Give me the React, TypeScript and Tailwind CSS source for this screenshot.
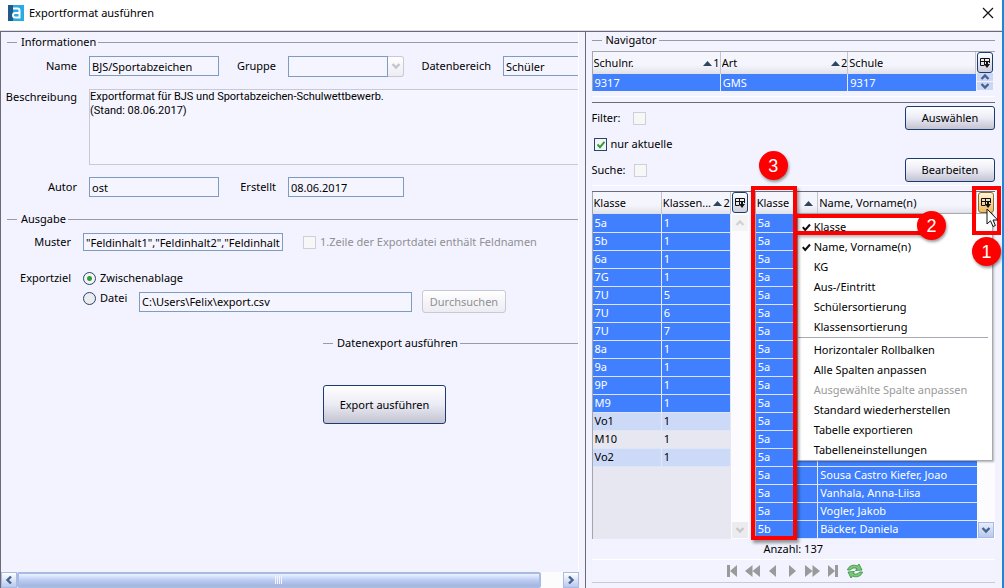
import type { ReactNode } from "react";
import clsx from "clsx";

const classes = [
  ["5a", "1"],
  ["5b", "1"],
  ["6a", "1"],
  ["7G", "1"],
  ["7U", "5"],
  ["7U", "6"],
  ["7U", "7"],
  ["8a", "1"],
  ["9a", "1"],
  ["9P", "1"],
  ["M9", "1"],
  ["Vo1", "1"],
  ["M10", "1"],
  ["Vo2", "1"],
];

const pupils = [
  ...Array.from({ length: 14 }, () => ["5a", ""]),
  ["5a", "Sousa Castro Kiefer, Joao"],
  ["5a", "Vanhala, Anna-Liisa"],
  ["5a", "Vogler, Jakob"],
  ["5b", "Bäcker, Daniela"],
];

const columnItems = [
  { label: "Klasse", checked: true },
  { label: "Name, Vorname(n)", checked: true },
  { label: "KG", checked: false },
  { label: "Aus-/Eintritt", checked: false },
  { label: "Schülersortierung", checked: false },
  { label: "Klassensortierung", checked: false },
];

const actionItems = [
  { label: "Horizontaler Rollbalken" },
  { label: "Alle Spalten anpassen" },
  { label: "Ausgewählte Spalte anpassen", disabled: true },
  { label: "Standard wiederherstellen" },
  { label: "Tabelle exportieren" },
  { label: "Tabelleneinstellungen" },
];

const field = "border border-[#7f9bc0] bg-[#f5f5ff] px-0.5 outline-none";
const button =
  "rounded-[3px] border border-[#1b3c73] bg-linear-to-b from-white via-[#ebebf5] to-[#c3c3d2]";

function Heading({ children, className }: { children: ReactNode; className?: string }) {
  return (
    <div className={clsx("flex h-4 items-center", className)}>
      <span className="mr-1 h-px w-2.5 bg-[#9a9aa0]" />
      <h2>{children}</h2>
      <span className="ml-0.5 h-px flex-1 bg-[#9a9aa0]" />
    </div>
  );
}

function Chevron({ dir, color = "#46628f" }: { dir: "up" | "down" | "left" | "right"; color?: string }) {
  const d = {
    up: "M1.500 7 5 3.500 8.500 7",
    down: "M1.500 3 5 6.500 8.500 3",
    left: "M7 1.500 3.500 5 7 8.500",
    right: "M3 1.500 6.500 5 3 8.500",
  }[dir];
  return (
    <svg width="10" height="10" viewBox="0 0 10 10" fill="none" stroke={color} strokeWidth="2.4" className="shrink-0">
      <path d={d} />
    </svg>
  );
}

function SortArrow({ order }: { order?: string }) {
  return (
    <span className={clsx("flex shrink-0 items-center gap-px", !order && "pr-1")}>
      <svg width="9" height="5" viewBox="0 0 9 5" fill="#2c4560">
        <path d="M4.500 0 9 5H0z" />
      </svg>
      {order}
    </span>
  );
}

function ColumnButton({ active }: { active?: boolean }) {
  return (
    <button
      aria-label="Spalten"
      className={clsx(
        "flex h-[21px] w-4 shrink-0 items-center justify-center rounded-[3px] border",
        active
          ? "border-[#8a6a2c] bg-linear-to-b from-[#fff3dc] to-[#f0b95c]"
          : "border-[#1b3c73] bg-linear-to-b from-white to-[#cfcfdd]"
      )}
    >
      <svg width="10" height="10" viewBox="0 0 10 10" fill="none" stroke="#111" className="shrink-0">
        <path d="M4 7.500H.500v-7h9V5M.500 3.500h9M4.500 .500v7" />
        <path d="M6 4h2v2h2L7 10 4 6h2z" fill="#111" stroke="none" />
      </svg>
    </button>
  );
}

function HeadCell({ label, sort, order }: { label: string; sort?: boolean; order?: string }) {
  return (
    <th className="h-[22px] border-r border-[#c4c4cc] bg-linear-to-b from-[#f5f5fd] from-60% to-[#e0e0e8] p-0 pl-px font-normal">
      <div className="flex items-center justify-between overflow-hidden whitespace-nowrap">
        <span>{label}</span>
        {sort && <SortArrow order={order} />}
      </div>
    </th>
  );
}

function Badge({ children, className }: { children: ReactNode; className: string }) {
  return (
    <span
      className={clsx(
        "absolute z-20 flex size-[29px] items-center justify-center rounded-full bg-[#ff0000] font-['Liberation_Sans'] text-lg text-white shadow-[1px_2px_3px_rgba(0,0,0,0.4)]",
        className
      )}
    >
      {children}
    </span>
  );
}

function ExportForm() {
  return (
    <section className="mr-1.5 flex min-w-0 flex-col overflow-hidden border-l border-[#6b6b73]">
      <div className="flex flex-1 flex-col border-r border-white pt-0.5">
        <Heading className="ml-1.5">Informationen</Heading>

        <div className="mt-1.5 flex h-5 items-center">
          <label htmlFor="name" className="w-[76px] text-right">Name</label>
          <input id="name" readOnly defaultValue="BJS/Sportabzeichen" className={clsx(field, "ml-3 h-5 w-[130px]")} />
          <label htmlFor="gruppe" className="w-[57px] text-right">Gruppe</label>
          <div className="relative ml-3 flex h-[21px]">
            <select id="gruppe" disabled className="w-[100px] appearance-none border border-[#7f9bc0] bg-[#f5f5ff]" />
            <span className="flex w-4 items-center justify-center rounded-r-[3px] border border-l-0 border-[#c9c9d6] bg-linear-to-b from-white to-[#ececf4]">
              <Chevron dir="down" color="#c4c4cc" />
            </span>
          </div>
          <label htmlFor="bereich" className="w-[87px] text-right">Datenbereich</label>
          <input id="bereich" readOnly defaultValue="Schüler" className={clsx(field, "ml-3 h-5 min-w-0 flex-1 border-r-0")} />
        </div>

        <div className="mt-[13px] flex">
          <label htmlFor="beschreibung" className="w-[76px] text-right">Beschreibung</label>
          <textarea
            id="beschreibung"
            readOnly
            defaultValue={"Exportformat für BJS und Sportabzeichen-Schulwettbewerb.\n(Stand: 08.06.2017)"}
            className="ml-3 h-[76px] min-w-0 flex-1 resize-none border border-r-0 border-[#c9c9d6] bg-[#f5f5ff] font-[Roboto] leading-[14px] outline-none"
          />
        </div>

        <div className="mt-3 flex h-5 items-center">
          <label htmlFor="autor" className="w-[76px] text-right">Autor</label>
          <input id="autor" readOnly defaultValue="ost" className={clsx(field, "ml-3 h-5 w-[130px]")} />
          <label htmlFor="erstellt" className="w-[57px] text-right">Erstellt</label>
          <input id="erstellt" readOnly defaultValue="08.06.2017" className={clsx(field, "ml-3 h-5 w-[116px]")} />
        </div>

        <Heading className="mt-3.5 ml-1.5">Ausgabe</Heading>

        <div className="mt-1.5 flex h-[18px] items-center">
          <label htmlFor="muster" className="w-[70px] text-right">Muster</label>
          <input
            id="muster"
            readOnly
            defaultValue={'"Feldinhalt1","Feldinhalt2","Feldinhalt3"'}
            className={clsx(field, "ml-3 h-[18px] w-[200px]")}
          />
          <label className="ml-5 flex items-center gap-1 text-[#8f8f94]">
            <input type="checkbox" disabled className="size-[13px] appearance-none border border-[#cfcfd6] bg-[#f7f7f7]" />
            1.Zeile der Exportdatei enthält Feldnamen
          </label>
        </div>

        <div className="mt-[17px] flex h-5 items-center">
          <span className="w-[70px] text-right">Exportziel</span>
          <label className="ml-3 flex items-center gap-1">
            <input
              type="radio"
              name="ziel"
              defaultChecked
              className="size-[13px] appearance-none rounded-full border border-[#26446f] bg-[#f4f4f4] checked:bg-[radial-gradient(circle,#2f9e3a_0_2px,#f4f4f4_3px)]"
            />
            Zwischenablage
          </label>
        </div>

        <div className="mt-0.5 flex h-[23px] items-center">
          <label className="ml-[82px] flex w-14 items-center gap-1 self-start">
            <input type="radio" name="ziel" className="size-[13px] appearance-none rounded-full border border-[#26446f] bg-[#ececec]" />
            Datei
          </label>
          <input aria-label="Datei" readOnly defaultValue="C:\Users\Felix\export.csv" className={clsx(field, "h-5 w-[273px]")} />
          <button disabled className="ml-2.5 h-[23px] w-[84px] rounded-[3px] border border-[#c9c9d6] bg-linear-to-b from-white to-[#ececf2] text-[#8f8f94]">
            Durchsuchen
          </button>
        </div>

        <div className="mt-[22px] ml-[322px]">
          <Heading>Datenexport ausführen</Heading>
          <button className={clsx(button, "mt-[34px] h-[39px] w-[123px]")}>Export ausführen</button>
        </div>
      </div>

      <div className="flex h-4 bg-[#fcfcfc]">
        <button aria-label="Nach links" className="flex w-4 items-center justify-center border border-[#a9bbe4] bg-linear-to-b from-white to-[#b9c9ec]">
          <Chevron dir="left" />
        </button>
        <div className="flex flex-1">
          <div className="flex w-[96%] items-center justify-center gap-px rounded-[2px] border-2 border-[#a9bbe4] bg-linear-to-b from-[#eef3ff] via-[#bccdf5] to-[#a5b5dc]">
            {[0, 1, 2, 3].map((i) => (
              <span key={i} className="h-2 w-px bg-[#f2f6ff]" />
            ))}
          </div>
        </div>
        <button aria-label="Nach rechts" className="flex w-4 items-center justify-center border border-[#a9bbe4] bg-linear-to-b from-white to-[#b9c9ec]">
          <Chevron dir="right" />
        </button>
      </div>
    </section>
  );
}

function SchoolTable() {
  return (
    <div className="flex border-t border-l border-[#a5a5ab]">
      <table className="flex-1 table-fixed border-collapse text-left">
        <thead>
          <tr>
            <HeadCell label="Schulnr." sort order="1" />
            <HeadCell label="Art" sort order="2" />
            <HeadCell label="Schule" />
          </tr>
        </thead>
        <tbody>
          <tr className="h-[17px] bg-[#4080ff] text-white">
            <td className="w-1/3 border-r border-[#e6e9f5] p-0 pl-0.5">9317</td>
            <td className="w-1/3 border-r border-[#e6e9f5] p-0 pl-0.5">GMS</td>
            <td className="w-1/3 p-0 pl-0.5">9317</td>
          </tr>
        </tbody>
      </table>
      <div className="ml-px w-[18px]">
        <ColumnButton />
        <button aria-label="Hoch" className="flex h-2 w-4 items-center justify-center overflow-hidden bg-[#ccd8f3]">
          <Chevron dir="up" />
        </button>
        <button aria-label="Runter" className="mt-px flex h-2 w-4 items-center justify-center overflow-hidden bg-[#ccd8f3]">
          <Chevron dir="down" />
        </button>
      </div>
    </div>
  );
}

function ClassTable() {
  return (
    <div className="flex h-[347px] border-l border-[#a5a5ab] bg-[#e7e7f1]">
      <div className="flex-1">
        <table className="w-full table-fixed border-collapse text-left">
          <thead>
            <tr>
              <HeadCell label="Klasse" />
              <HeadCell label="Klassen..." sort order="2" />
            </tr>
          </thead>
          <tbody>
            {classes.map(([name, no], i) => (
              <tr
                key={i}
                className={clsx(
                  "h-[18px] border-b border-[#dfe5f8]",
                  i < 11 ? "bg-[#4080ff] text-white" : i % 2 ? "bg-[#ccd9f7]" : "bg-[#e7e7f1]"
                )}
              >
                <td className="border-r border-[#e6e9f5] p-0 pl-0.5">{name}</td>
                <td className="p-0 pl-0.5">{no}</td>
              </tr>
            ))}
          </tbody>
        </table>
      </div>
      <div className="flex w-[18px] flex-col items-center bg-[#fcfcfe]">
        <ColumnButton />
        <span className="mt-0.5 flex size-4 items-center justify-center bg-[#f4f4f6]">
          <Chevron dir="up" color="#d2d2d2" />
        </span>
        <span className="mt-auto mb-px flex size-4 items-center justify-center bg-[#ececf0]">
          <Chevron dir="down" color="#c8c8c8" />
        </span>
      </div>
    </div>
  );
}

function ColumnMenu() {
  return (
    <div role="menu" className="absolute top-[21px] right-0.5 left-[42px] z-10 border border-[#a9a9b4] bg-white pt-[3px] shadow-[1px_1px_2px_rgba(0,0,0,0.3)]">
      {columnItems.map((item) => (
        <button key={item.label} role="menuitemcheckbox" aria-checked={item.checked} className="flex h-5 w-full items-center pl-1">
          <span className="flex w-3">
            {item.checked && (
              <svg width="9" height="9" viewBox="0 0 9 9" fill="none" stroke="#111" strokeWidth="2">
                <path d="M.8 4.200 3.200 7 8 1.500" />
              </svg>
            )}
          </span>
          {item.label}
        </button>
      ))}
      <hr className="mr-1 mb-0.5 border-[#a9a9b4]" />
      {actionItems.map((item) => (
        <button
          key={item.label}
          role="menuitem"
          disabled={item.disabled}
          className="flex h-5 w-full items-center pl-4 disabled:text-[#9a9a9a]"
        >
          {item.label}
        </button>
      ))}
    </div>
  );
}

function PupilTable() {
  return (
    <div className="relative">
      <div className="flex h-[347px] overflow-hidden border-l border-[#a5a5ab]">
        <div className="flex-1">
          <table className="w-full table-fixed border-collapse text-left">
            <colgroup>
              <col className="w-[62px]" />
              <col />
            </colgroup>
            <thead>
              <tr>
                <HeadCell label="Klasse" sort />
                <HeadCell label="Name, Vorname(n)" />
              </tr>
            </thead>
            <tbody>
              {pupils.map(([name, pupil], i) => (
                <tr key={i} className="h-[18px] border-b border-[#dfe5f8] bg-[#4080ff] text-white">
                  <td className="border-r border-[#e6e9f5] p-0 pl-0.5">{name}</td>
                  <td className="p-0 pl-0.5 whitespace-nowrap">{pupil}</td>
                </tr>
              ))}
            </tbody>
          </table>
        </div>
        <div className="flex w-[18px] flex-col items-center bg-[#fcfcfe]">
          <ColumnButton active />
          <button aria-label="Runter" className="mt-auto mb-px flex size-4 items-center justify-center border border-[#a9bbe4] bg-linear-to-b from-[#e6edfc] to-[#b9c9ec]">
            <Chevron dir="down" />
          </button>
        </div>
      </div>

      <ColumnMenu />

      <span className="absolute -top-1.5 -left-1 z-20 h-[354px] w-[46px] border-4 border-[#ff0000] shadow-[2px_3px_3px_rgba(0,0,0,0.4)]" />
      <span className="absolute top-[22px] left-[42px] z-20 h-[21px] w-[130px] border-y-4 border-[#ff0000] shadow-[1px_2px_3px_rgba(0,0,0,0.3)]" />
      <span className="absolute -top-1.5 -right-1.5 z-20 h-[49px] w-[29px] border-4 border-[#ff0000]" />
      <Badge className="-top-[41px] left-1">3</Badge>
      <Badge className="top-[19px] right-[49px]">2</Badge>
      <Badge className="top-[45px] -right-1.5">1</Badge>
      <svg className="absolute top-4 -right-1 z-30" width="13" height="20" viewBox="0 0 13 20" fill="#fff" stroke="#111">
        <path d="M1 1v15l3.500-3.200L7 18.500l2.400-1-2.400-5.500h4.700z" />
      </svg>
    </div>
  );
}

function NavigationBar() {
  return (
    <nav className="flex h-[23px] items-center justify-center gap-[7px] border-t border-white pl-1 text-[#9a9a9a]">
      <button aria-label="Erster">
        <svg width="12" height="12" viewBox="0 0 12 12" fill="currentColor"><path d="M1 0h3v12H1zM11 0v12L4 6z" /></svg>
      </button>
      <button aria-label="Schnell zurück">
        <svg width="15" height="12" viewBox="0 0 15 12" fill="currentColor"><path d="M7.500 0v12L0 6zM15 0v12L7.500 6z" /></svg>
      </button>
      <button aria-label="Zurück">
        <svg width="12" height="12" viewBox="0 0 12 12" fill="currentColor"><path d="M9 0v12L2 6z" /></svg>
      </button>
      <button aria-label="Weiter">
        <svg width="12" height="12" viewBox="0 0 12 12" fill="currentColor"><path d="M3 0v12l7-6z" /></svg>
      </button>
      <button aria-label="Schnell weiter">
        <svg width="15" height="12" viewBox="0 0 15 12" fill="currentColor"><path d="M0 0v12l7.500-6zM7.500 0v12L15 6z" /></svg>
      </button>
      <button aria-label="Letzter">
        <svg width="12" height="12" viewBox="0 0 12 12" fill="currentColor"><path d="M8 0h3v12H8zM1 0v12l7-6z" /></svg>
      </button>
      <button aria-label="Aktualisieren">
        <svg width="18" height="16" viewBox="0 0 18 16" fill="#7cc979" stroke="#2f8b3c" strokeWidth=".8" strokeLinejoin="round">
          <path d="M1.500 7C2.500 3 7 1 11.500 3l1.500-2 3 6-6.500.5L11 5.500C8 4.300 5.500 5 4.500 7z" />
          <path d="M16.500 9C15.500 13 11 15 6.500 13L5 15 2 9l6.500-.5L7 10.500c3 1.200 5.500.5 6.500-1.500z" />
        </svg>
      </button>
    </nav>
  );
}

function Navigator() {
  return (
    <section className="min-w-0 border-l border-[#6b6b73] pr-[7px] pl-1.5">
      <Heading>Navigator</Heading>
      <div className="mt-[3px]">
        <SchoolTable />
      </div>

      <div className="mt-[5px] border-t border-white pt-[5px]">
        <div className="border-t border-[#6b6b73] pt-[3px]">
          <div className="flex h-6 items-center">
            <label className="flex items-center gap-3">
              Filter:
              <input type="checkbox" className="size-[13px] appearance-none border border-[#cfcfd6] bg-[#f7f7f7]" />
            </label>
            <button className={clsx(button, "ml-auto h-6 w-[90px]")}>Auswählen</button>
          </div>
          <label className="flex h-7 items-center gap-1 pl-0.5">
            <span className="relative flex">
              <input type="checkbox" defaultChecked className="size-[13px] appearance-none border border-[#26446f] bg-[#f4f4f4]" />
              <svg className="absolute top-[3px] left-[3px]" width="8" height="8" viewBox="0 0 8 8" fill="none" stroke="#2f9e3a" strokeWidth="2">
                <path d="M.5 3.500 3 6.200 7.500.8" />
              </svg>
            </span>
            nur aktuelle
          </label>
          <div className="flex h-6 items-center">
            <label className="flex items-center gap-2">
              Suche:
              <input type="checkbox" className="size-[13px] appearance-none border border-[#cfcfd6] bg-[#f7f7f7]" />
            </label>
            <button className={clsx(button, "ml-auto h-6 w-[90px]")}>Bearbeiten</button>
          </div>
        </div>
      </div>

      <div className="mt-[3px] border-t border-white pt-[5px]">
        <div className="grid grid-cols-[157fr_240fr] gap-1.5 border-t border-[#6b6b73]">
          <ClassTable />
          <PupilTable />
        </div>
      </div>

      <p className="flex h-5 items-center justify-center">Anzahl: 137</p>
      <NavigationBar />
      <hr className="border-[#c9c9d6]" />
    </section>
  );
}

export default function App() {
  return (
    <div className="flex h-screen flex-col overflow-hidden border-r-2 border-[#1a86dc] bg-[#f3f3ff] font-['Noto_Sans',sans-serif] text-[11px] leading-4 text-black">
      <header className="flex h-[31px] shrink-0 items-center border-b border-[#dcdcee] bg-white pr-2 pb-1 pl-2">
        <svg width="16" height="16" viewBox="0 0 16 16">
          <path d="M0 0h16v16H0z" fill="#29abe2" />
          <path d="M0 0h5v16H0z" fill="#1d5a8e" />
          <path d="M5 3.500h4.500q2 0 2 2v7H7.500q-2.500 0-2.500-2.300T7.500 8h4" fill="none" stroke="#fff" strokeWidth="2" />
        </svg>
        <h1 className="ml-[5px] flex-1">Exportformat ausführen</h1>
        <button aria-label="Schließen">
          <svg width="12" height="12" viewBox="0 0 12 12" fill="none" stroke="#111" strokeWidth="1.200">
            <path d="m1 1 10 10M11 1 1 11" />
          </svg>
        </button>
      </header>
      <main className="grid flex-1 grid-cols-[7fr_5fr] border-t border-[#6b6b73]">
        <ExportForm />
        <Navigator />
      </main>
    </div>
  );
}
